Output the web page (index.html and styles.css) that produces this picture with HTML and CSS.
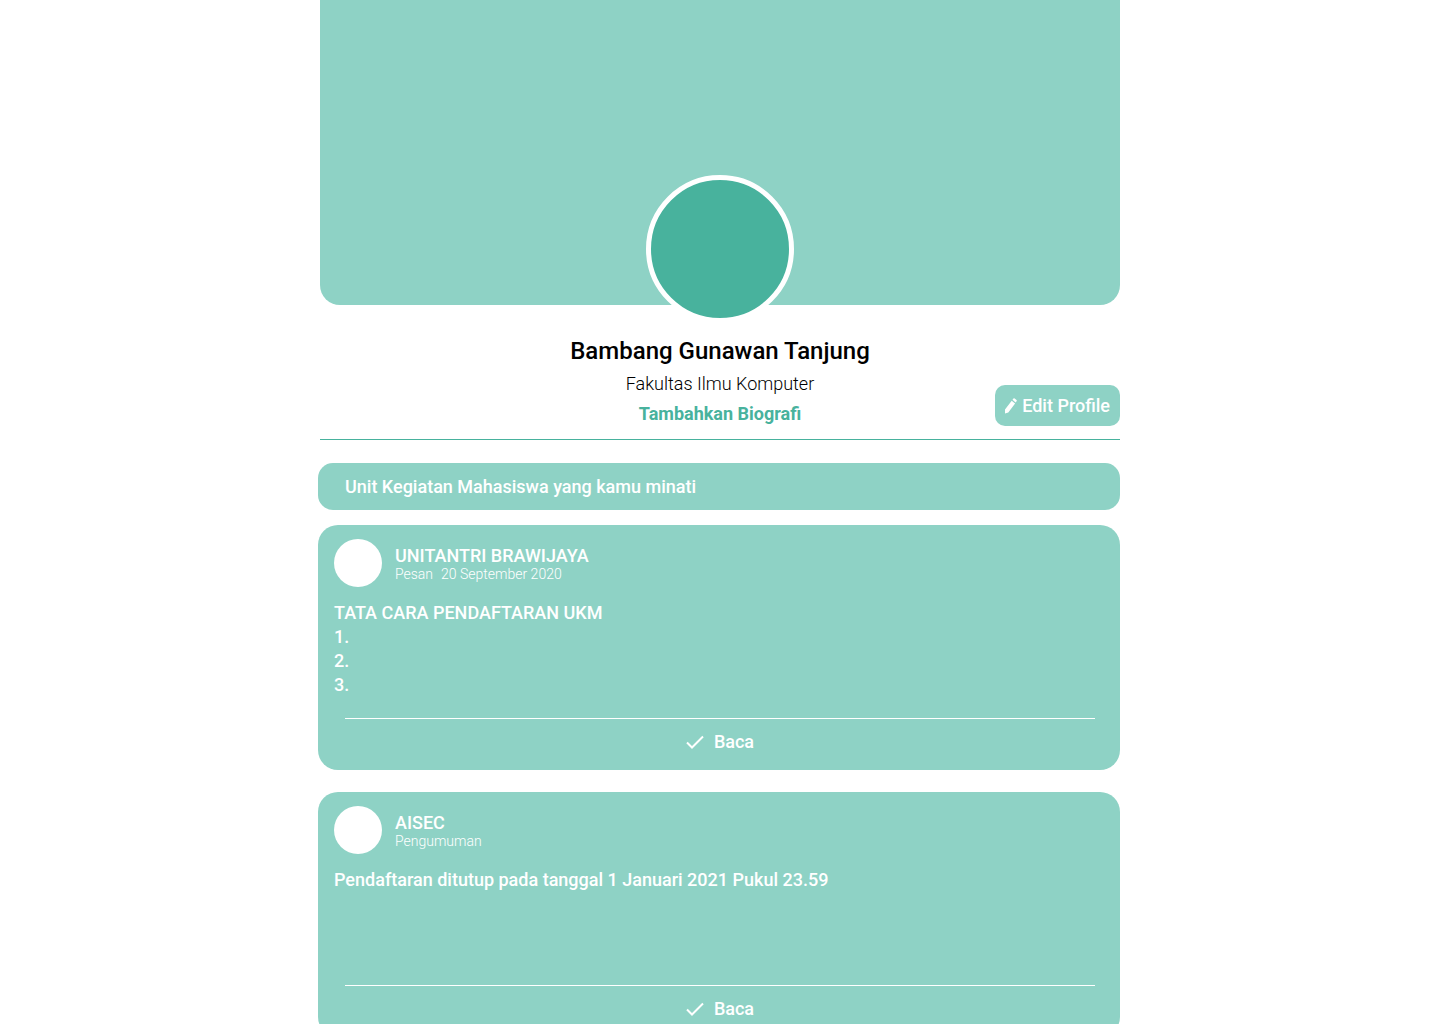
FILE: index.html
```html
<!DOCTYPE html>
<html lang="id">
<head>
<meta charset="utf-8">
<meta name="viewport" content="width=device-width, initial-scale=1">
<title>Bambang Gunawan Tanjung</title>
<link rel="stylesheet" href="styles.css">
</head>
<body>
<main class="page">
  <header>
    <div class="cover"></div>
    <div class="avatar"></div>
    <div class="profile">
      <div class="profile-text">
        <h1 class="name">Bambang Gunawan Tanjung</h1>
        <p class="faculty">Fakultas Ilmu Komputer</p>
        <a class="bio-link" href="#">Tambahkan Biografi</a>
      </div>
      <button class="edit" type="button">
        <svg class="edit-icon" viewBox="0 0 12 16" aria-hidden="true"><path d="M0 15.500v-3.900L6.700 2.700l3.400 2.900L3.300 14.600zM7.500 1.800l.9-1.200q.6-.8 1.300-.2l1.800 1.500q.6.6.1 1.300l-1 1.200z"/></svg>
        <span>Edit Profile</span>
      </button>
    </div>
  </header>

  <section class="feed">
    <h2 class="feed-title">Unit Kegiatan Mahasiswa yang kamu minati</h2>

    <article class="card">
      <div class="card-head">
        <div class="card-avatar"></div>
        <div class="card-source">
          <h3 class="card-author">UNITANTRI BRAWIJAYA</h3>
          <p class="card-meta"><span>Pesan</span><time datetime="2020-09-20">20 September 2020</time></p>
        </div>
      </div>
      <div class="card-body">
        <p>TATA CARA PENDAFTARAN UKM</p>
        <p>1.</p>
        <p>2.</p>
        <p>3.</p>
      </div>
      <div class="card-foot">
        <button class="read" type="button">
          <svg class="read-icon" viewBox="0 0 18 14" aria-hidden="true"><path d="M1 7.500l5 5L17 1.500"/></svg>
          <span>Baca</span>
        </button>
      </div>
    </article>

    <article class="card">
      <div class="card-head">
        <div class="card-avatar"></div>
        <div class="card-source">
          <h3 class="card-author">AISEC</h3>
          <p class="card-meta"><span>Pengumuman</span></p>
        </div>
      </div>
      <div class="card-body">
        <p>Pendaftaran ditutup pada tanggal 1 Januari 2021 Pukul 23.59</p>
      </div>
      <div class="card-foot">
        <button class="read" type="button">
          <svg class="read-icon" viewBox="0 0 18 14" aria-hidden="true"><path d="M1 7.500l5 5L17 1.500"/></svg>
          <span>Baca</span>
        </button>
      </div>
    </article>
  </section>
</main>
</body>
</html>
```
FILE: styles.css
```css
* {
  box-sizing: border-box;
}

body {
  margin: 0;
  background: #fff;
  color: #000;
  font: 500 18px/24px Roboto, sans-serif;
}

h1, h2, h3, p {
  margin: 0;
  font-weight: inherit;
}

button {
  border: 0;
  color: #fff;
  font: inherit;
  cursor: pointer;
}

.page {
  max-width: 800px;
  margin: 0 auto;
}

.cover {
  height: 305px;
  background: #8ed2c5;
  border-radius: 0 0 20px 20px;
}

.avatar {
  width: 148px;
  height: 148px;
  margin: -130px auto 0;
  border: 5px solid #fff;
  border-radius: 50%;
  background: #48b29d;
  position: relative;
}

.profile {
  display: grid;
  grid-template-columns: 1fr auto 1fr;
  align-items: end;
  padding: 14px 0 13px;
  border-bottom: 1px solid #48b29d;
}

.profile-text {
  grid-column: 2;
  display: flex;
  flex-direction: column;
  align-items: center;
  gap: 6px;
}

.name {
  font-size: 24px;
  line-height: 29px;
}

.faculty {
  font-weight: 300;
}

.bio-link {
  color: #48b29d;
  font-weight: 700;
  text-decoration: none;
}

.edit {
  justify-self: end;
  display: flex;
  align-items: center;
  gap: 5px;
  height: 41px;
  padding: 0 10px;
  border-radius: 10px;
  background: #8ed2c5;
}

.edit-icon {
  width: 12px;
  height: 16px;
  fill: #fff;
}

.feed {
  margin: 23px 0 24px -2px;
}

.feed-title {
  margin-bottom: 15px;
  padding: 12px 27px 11px;
  border-radius: 15px;
  background: #8ed2c5;
  color: #fff;
  font-size: 18px;
}

.card {
  display: flex;
  flex-direction: column;
  min-height: 245px;
  padding: 14px 16px 0;
  border-radius: 20px;
  background: #8ed2c5;
  color: #fff;
}

.card + .card {
  margin-top: 22px;
}

.card-head {
  display: flex;
  align-items: center;
  gap: 13px;
  margin-bottom: 14px;
}

.card-avatar {
  width: 48px;
  height: 48px;
  border-radius: 50%;
  background: #fff;
}

.card-source {
  padding-top: 2px;
}

.card-author {
  font-size: 18px;
  line-height: 20px;
}

.card-meta {
  display: flex;
  gap: 8px;
  font-size: 14px;
  font-weight: 300;
  line-height: 16px;
}

.card-foot {
  display: flex;
  justify-content: center;
  margin: auto 9px 0 11px;
  padding: 11px 0 16px;
  border-top: 1px solid #fff;
}

.read {
  display: flex;
  align-items: center;
  gap: 10px;
  padding: 0;
  background: none;
}

.read-icon {
  width: 18px;
  height: 14px;
  fill: none;
  stroke: #fff;
  stroke-width: 2;
}
```
